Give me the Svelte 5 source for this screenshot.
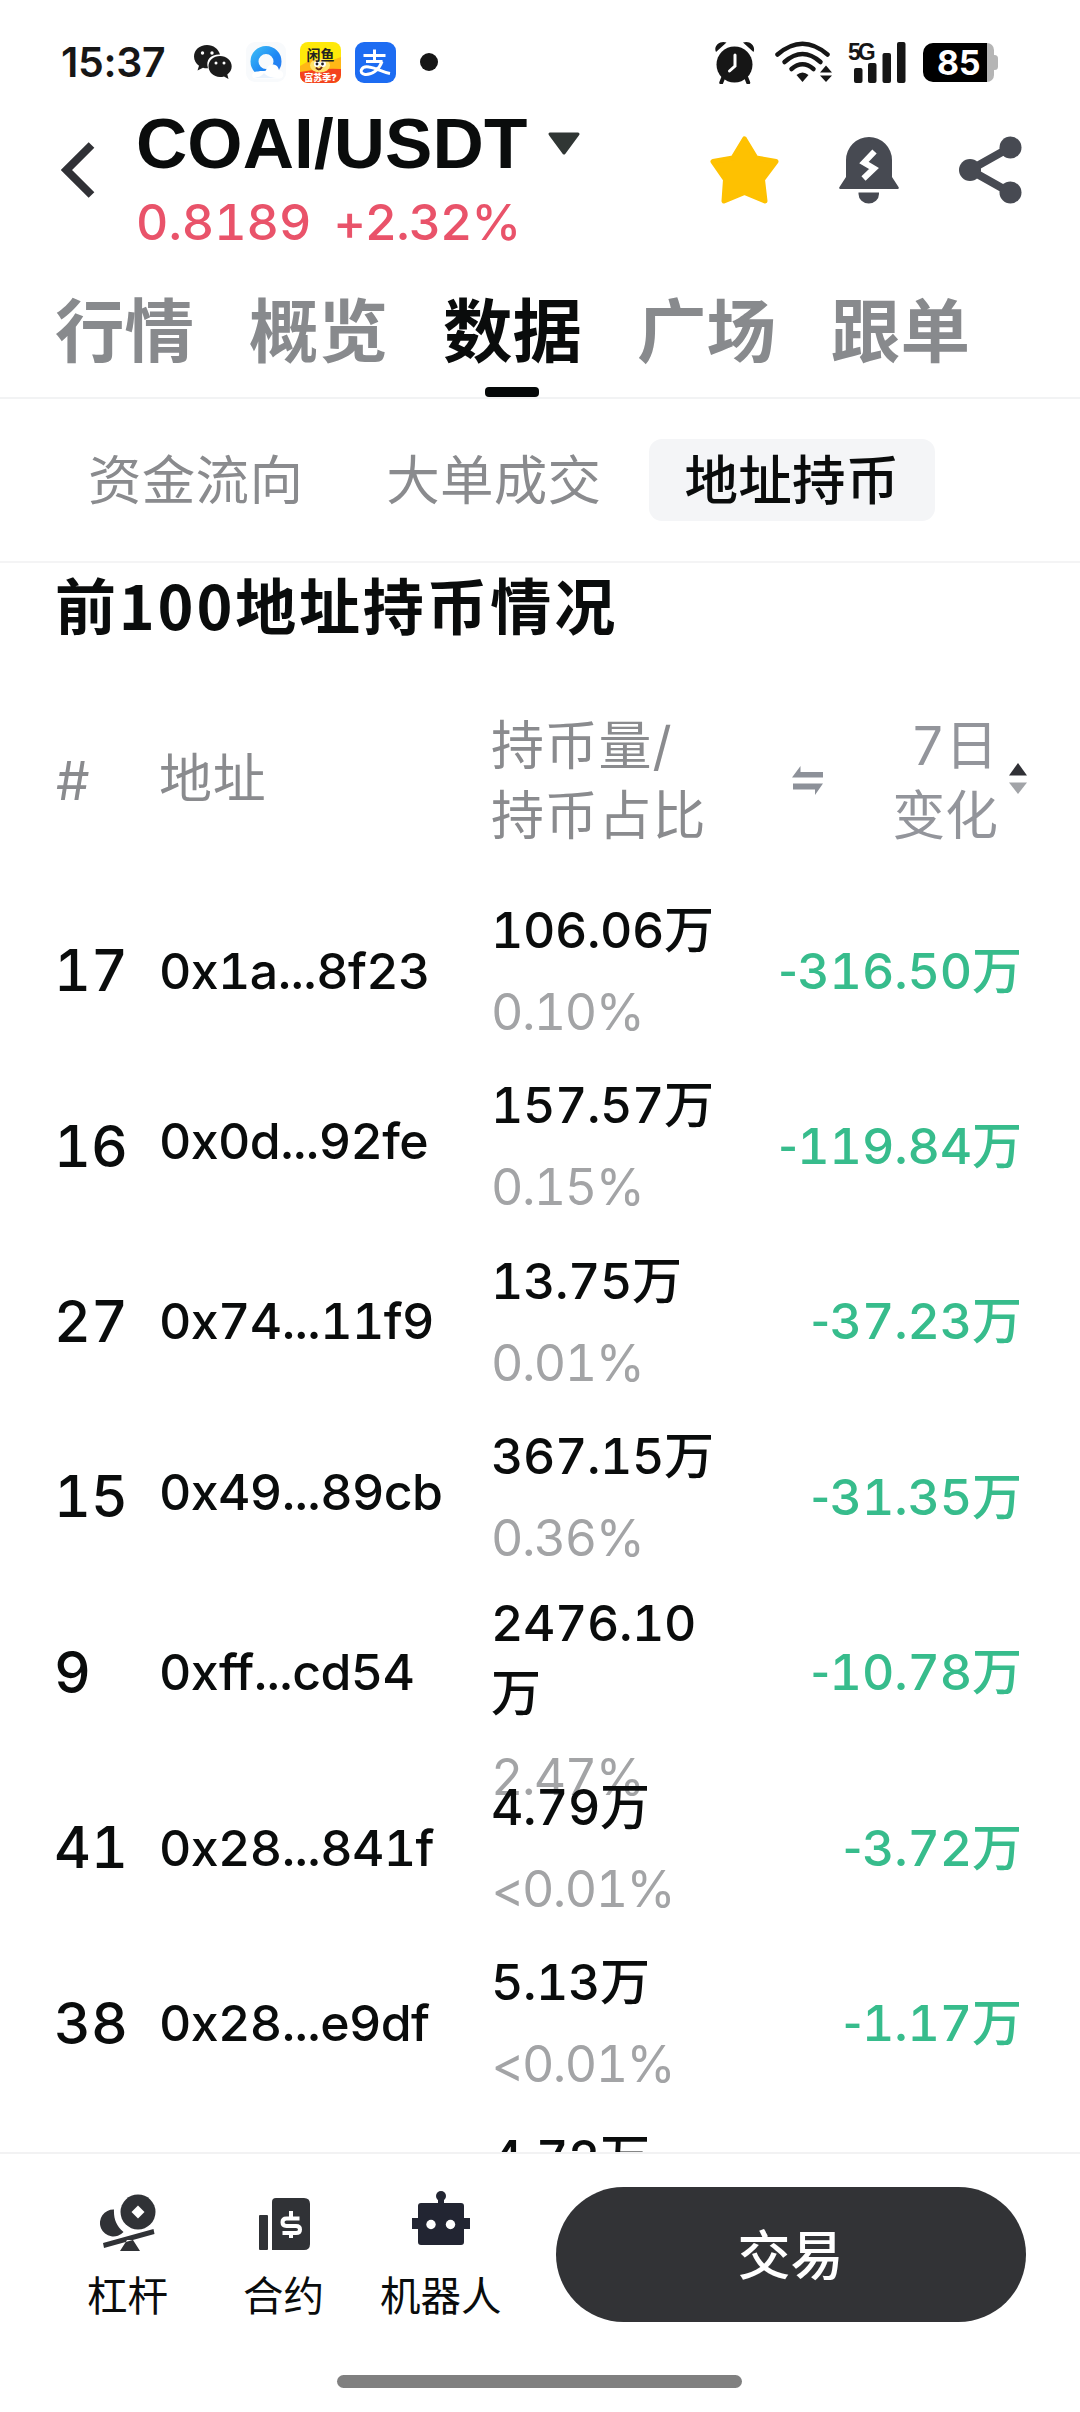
<script>
	const tabs = ['行情', '概览', '数据', '广场', '跟单'];
	const subTabs = ['资金流向', '大单成交', '地址持币'];
	let tab = $state(2);
	let subTab = $state(2);

	const rows = [
		{ rank: 17, addr: '0x1a...8f23', amount: '106.06万', share: '0.10%', change: '316.50万' },
		{ rank: 16, addr: '0x0d...92fe', amount: '157.57万', share: '0.15%', change: '119.84万', raised: true },
		{ rank: 27, addr: '0x74...11f9', amount: '13.75万', share: '0.01%', change: '37.23万' },
		{ rank: 15, addr: '0x49...89cb', amount: '367.15万', share: '0.36%', change: '31.35万', raised: true },
		{ rank: 9, addr: '0xff...cd54', amount: '2476.10万', share: '2.47%', change: '10.78万' },
		{ rank: 41, addr: '0x28...841f', amount: '4.79万', share: '<0.01%', change: '3.72万' },
		{ rank: 38, addr: '0x28...e9df', amount: '5.13万', share: '<0.01%', change: '1.17万' },
		{ rank: '', addr: '', amount: '4.72万', share: '', change: '' }
	];
</script>

<div class="screen">
	<div class="status">
		<span class="time">15:37</span>
		<svg class="wechat" width="38" height="34" viewBox="0 0 38 34">
			<path fill="#1b1b1b" d="M13 0C5.500 0 0 5 0 11.500c0 4 2 7 5 9.200L3.500 25.500l5.500-2.800c1.500.4 3 .6 5 .5C11 14 18 9 26 9.500 24.500 4 19.500 0 13 0z" />
			<path fill="#1b1b1b" d="M26 11c-6.600 0-11.500 4.500-11.500 10.300S19.500 32 26 32c1.400 0 2.800-.2 4-.6l4.500 2.500-1.200-4.300C36 27.500 37.700 24.800 37.700 21.300 37.700 15.500 32.500 11 26 11z" />
			<g fill="#fff"><circle cx="8.500" cy="8" r="1.700" /><circle cx="18" cy="8" r="1.700" /><circle cx="22" cy="18" r="1.500" /><circle cx="30" cy="18" r="1.500" /></g>
		</svg>
		<svg class="qq" width="40" height="40" viewBox="0 0 40 40">
			<defs>
				<linearGradient id="ring" x1="0" y1="0" x2="1" y2="1"><stop offset="0" stop-color="#37b4f5" /><stop offset=".6" stop-color="#1e86f4" /><stop offset="1" stop-color="#2b7cf0" /></linearGradient>
			</defs>
			<rect width="40" height="40" rx="9" fill="#f8fafc" />
			<circle cx="20" cy="19.500" r="11.500" fill="none" stroke="url(#ring)" stroke-width="8" />
			<path fill="#fff" d="M9 36.500c-5-1-3-8 3-7 3-1 6 0 8-1 2-8 12-8 13 0 5 0 6 7 1 8z" />
			<path fill="#eaf2fc" d="M8 36c4-1 7-1 10-5 2 3 8 5 15 5z" />
		</svg>
		<svg class="app" width="41" height="41" viewBox="0 0 41 41">
			<clipPath id="xy"><rect width="41" height="41" rx="8" /></clipPath>
			<g clip-path="url(#xy)">
				<rect width="41" height="41" fill="#ffe90a" />
				<path fill="#ffb716" d="M0 24l12-7 18 2 11-4v16H0z" />
				<path fill="#f4431d" d="M0 30q20-4 41-3v14H0z" />
				<ellipse cx="20" cy="23.500" rx="10" ry="7" fill="#ffe36b" />
				<circle cx="17" cy="22" r="3" fill="#fff" /><circle cx="23" cy="22" r="3" fill="#fff" />
				<circle cx="17" cy="22" r="1.400" fill="#222" /><circle cx="22.500" cy="22" r="1.400" fill="#222" />
				<path d="M16 25.500q3 4 6-.5" stroke="#6b2a10" stroke-width="2" fill="none" />
			</g>
			<text x="20.500" y="17.500" text-anchor="middle" font-size="14" font-weight="700" fill="#222">闲鱼</text>
			<text x="20.500" y="39" text-anchor="middle" font-size="9" font-weight="900" fill="#fff">富苏季?</text>
		</svg>
		<svg class="app" width="41" height="41" viewBox="0 0 41 41">
			<rect width="41" height="41" rx="9" fill="#1d6cf2" />
			<g fill="none" stroke="#fff" stroke-width="3"><path d="M8.500 13.500h22M19.500 7.500v12M11 19.500h16.500" /><path d="M27 19.500C24 28 17 33 10 32.500c-7-1-4-9 4-7.500 8 1 13 5 21 6.500" /></g>
		</svg>
		<i class="dot"></i>
		<div class="sys">
			<svg width="42" height="43" viewBox="0 0 42 43">
				<circle cx="20.500" cy="23.500" r="18" fill="#161616" />
				<path d="M2 11C-1 5 6-1 12.500 1.500zM39.500 11C42 5 36-1 29 1.500z" fill="#161616" />
				<path d="M9.500 36l-2.200 5.500M32 36l2.200 5.500" stroke="#161616" stroke-width="4" stroke-linecap="round" />
				<path d="M21 14v11l-5.500 5" stroke="#fff" stroke-width="3" fill="none" stroke-linecap="round" />
			</svg>
			<svg class="wifi" width="57" height="42" viewBox="0 0 57 42">
				<g fill="none" stroke="#161616" stroke-width="4.500" stroke-linecap="round"><path d="M2.500 13.500Q27.500-8 52.500 13.500" /><path d="M9.500 21Q27.500 5 45.500 21" /><path d="M16.500 28q11-9.500 22 0" /></g>
				<path d="M21.500 34q6-5 12 0l-6 7z" fill="#161616" />
				<path d="M51 24.500l6 7H45zM51 41l-6-6.500h12z" fill="#161616" />
			</svg>
			<div class="signal">
				<b>5G</b>
				<svg width="52" height="41" viewBox="0 0 52 41"><g fill="#161616"><rect y="26" width="8.500" height="15" rx="2" /><rect x="14" y="21" width="8.500" height="20" rx="2" /><rect x="28.500" y="11" width="8.500" height="30" rx="2" /><rect x="43" width="8.500" height="41" rx="2" /></g></svg>
			</div>
			<div class="battery"><span>85</span></div>
		</div>
	</div>

	<header>
		<svg class="back" width="34" height="56" viewBox="0 0 34 56"><path d="M30.500 3L5.500 28l25 25" fill="none" stroke="#303136" stroke-width="8" /></svg>
		<div class="pair">
			<div class="symbol">COAI/USDT<svg width="34" height="24" viewBox="0 0 34 24"><path d="M3 2h28L17 21z" fill="#303634" stroke="#303634" stroke-width="3" stroke-linejoin="round" /></svg></div>
			<div class="price"><span>0.8189</span><span class="pct">+2.32%</span></div>
		</div>
		<div class="actions">
			<svg width="69" height="68" viewBox="0 0 69 68"><path d="M34.500 3L46 22l20 3.500L52.500 43.500 55 65 34.500 56.500 14 65l1.500-21.500L3 25.500 23 22z" fill="#fec101" stroke="#fec101" stroke-width="5" stroke-linejoin="round" /></svg>
			<svg width="60" height="68" viewBox="0 0 60 68">
				<path d="M7 24a23 23 0 0 1 46 0v17l6.500 10q1 2-1 2h-57q-2 0-1-2L7 41zM19.500 56.500h20.500v1.500a10.250 9.500 0 0 1-20.500 0z" fill="#474a52" />
				<path d="M35.500 15.500L25 26.500l10 6L24.500 42.500" fill="none" stroke="#fff" stroke-width="6" stroke-linejoin="miter" />
			</svg>
			<svg width="63" height="68" viewBox="0 0 63 68"><path d="M51 11.500L11 34l40 22.500" fill="none" stroke="#474a52" stroke-width="8" /><g fill="#474a52"><circle cx="51.500" cy="11.500" r="11" /><circle cx="11" cy="34" r="11" /><circle cx="51.500" cy="56.500" r="11" /></g></svg>
		</div>
	</header>

	<nav class="tabs">
		{#each tabs as name, i}
			<button class:active={tab === i} onclick={() => (tab = i)}>{name}</button>
		{/each}
	</nav>

	<nav class="subtabs">
		{#each subTabs as name, i}
			<button class:active={subTab === i} onclick={() => (subTab = i)}>{name}</button>
		{/each}
	</nav>

	<main>
		<h2>前100地址持币情况</h2>
		<div class="row head">
			<div class="rank">#</div>
			<div class="addr">地址</div>
			<div class="hold">持币量/<br />持币占比</div>
			<svg class="swap" width="32" height="30" viewBox="0 0 32 30"><path d="M0 11.500L8.500 0v6H31v5.500zM31 17.500L23 29v-5.500H1v-6z" fill="#8d9199" /></svg>
			<div class="change">7日<br />变化</div>
			<svg class="sort" width="18" height="32" viewBox="0 0 18 32"><path d="M9 0l9 12.500H0z" fill="#303136" /><path d="M9 31L0 19.500h18z" fill="#a2a4a8" /></svg>
		</div>
		{#each rows as row}
			<div class="row">
				<div class="rank">{row.rank}</div>
				<div class="addr" class:raised={row.raised}>{row.addr}</div>
				<div class="hold" class:tall={row.amount.length > 7}>
					<div class="amount">{row.amount}</div>
					<div class="share">{row.share}</div>
				</div>
				<div class="change">{#if row.change}<span class="minus">-</span>{row.change}{/if}</div>
			</div>
		{/each}
	</main>

	<footer>
		<div class="bar">
			<div class="tool lever">
				<svg width="56" height="57" viewBox="0 0 56 57">
					<path d="M14 15.500A13.500 13.500 0 1 0 23.500 38C16 32 13.500 24 14 15.500z" fill="#303236" />
					<circle cx="38" cy="18" r="17.500" fill="#303236" /><path d="M38 11.500l6.500 6.500-6.500 6.500-6.500-6.500z" fill="#fff" />
					<path d="M3 49l1 5 50.500-14-1-5zM27 46h6l7 11H20z" fill="#303236" />
				</svg>
				<span>杠杆</span>
			</div>
			<div class="tool contract">
				<svg width="52" height="52" viewBox="0 0 52 52">
					<rect y="17" width="9" height="35" rx="1" fill="#303236" />
					<path d="M13 4q0-4 4-4h28q6 0 6 6v40q0 6-6 6H13z" fill="#303236" />
					<path d="M40.500 20.500h-13q-4 0-4 3.700t4 3.700h9.500q4 0 4 3.500t-4 3.500H23.500M32 13v8M32 34v6" stroke="#fff" stroke-width="4" fill="none" />
				</svg>
				<span>合约</span>
			</div>
			<div class="tool robot">
				<svg width="58" height="55" viewBox="0 0 58 55">
					<circle cx="29" cy="5" r="5" fill="#222532" /><path d="M26 6h6v8h-6zM9 12h40q3 0 3 3v12h6v11h-6v13q0 3-3 3H9q-3 0-3-3V38H0V27h6V15q0-3 3-3z" fill="#222532" />
					<circle cx="19" cy="33.500" r="4.700" fill="#fff" /><circle cx="38.500" cy="33.500" r="4.700" fill="#fff" />
				</svg>
				<span>机器人</span>
			</div>
			<button class="trade">交易</button>
		</div>
		<div class="home"></div>
	</footer>
</div>

<style>
:global(body) {
	margin: 0;
	background: #fff;
}
.screen {
	width: 1080px;
	height: 2412px;
	overflow: hidden;
	display: flex;
	flex-direction: column;
	background: #fff;
	color: #0a0c0c;
	font-family: Inter, "Noto Sans CJK SC", sans-serif;
	font-variant-numeric: tabular-nums;
}
svg {
	display: block;
	flex: none;
}
button {
	border: 0;
	padding: 0;
	background: none;
	font: inherit;
	color: inherit;
	white-space: nowrap;
}

.status {
	height: 104px;
	flex: none;
	display: flex;
	align-items: center;
	padding: 20px 82px 0 61px;
	box-sizing: border-box;
	color: #161616;
}
.time {
	width: 133px;
	font-size: 41px;
	font-weight: 600;
	font-variant-numeric: normal;
	letter-spacing: -0.3px;
}
.qq {
	margin-left: 14px;
}
.app {
	margin-left: 14px;
}
.dot {
	width: 18px;
	height: 18px;
	margin-left: 24px;
	border-radius: 50%;
	background: #161616;
}
.sys {
	display: flex;
	align-items: center;
	margin-left: auto;
}
.wifi {
	margin-left: 19px;
}
.signal {
	position: relative;
	margin: 0 17px 0 22px;
}
.signal b {
	position: absolute;
	left: -6px;
	top: -1px;
	font: 700 23px/23px "Liberation Sans", sans-serif;
	letter-spacing: -3px;
}
.battery {
	width: 64px;
	height: 39px;
	margin-right: 11px;
	border-radius: 10px 0 0 10px;
	background: #000;
	color: #fff;
	font-size: 34px;
	font-weight: 700;
	line-height: 39px;
	text-align: center;
	position: relative;
}
.battery span {
	padding-left: 8px;
}
.battery::before {
	content: '';
	position: absolute;
	left: 64px;
	top: 0;
	width: 7px;
	height: 39px;
	border-radius: 0 9px 9px 0;
	background: #b5b5b5;
}
.battery::after {
	content: '';
	position: absolute;
	left: 68px;
	top: 12px;
	width: 7px;
	height: 15px;
	border-radius: 4px;
	background: #b5b5b5;
}

header {
	height: 160px;
	flex: none;
	display: flex;
	padding: 0 58px 0 61px;
}
.back {
	margin-top: 38px;
}
.pair {
	margin-left: 41px;
}
.symbol {
	display: flex;
	align-items: center;
	gap: 20px;
	height: 79px;
	font-family: "Liberation Sans", Arial, sans-serif;
	font-size: 71px;
	font-weight: 700;
	letter-spacing: 0.1px;
}
.price {
	display: flex;
	gap: 22px;
	height: 70px;
	font-size: 50px;
	line-height: 79px;
	font-weight: 500;
	color: #e9536a;
}
.pct {
	letter-spacing: -1px;
}
.actions {
	display: flex;
	gap: 60px;
	margin: 32px 0 0 auto;
}

.tabs {
	height: 133px;
	flex: none;
	display: flex;
	gap: 55px;
	padding: 0 55px;
	border-bottom: 2px solid #f2f3f4;
}
.tabs button {
	position: relative;
	font-size: 69.500px;
	line-height: 136px;
	font-weight: 700;
	color: #888a8d;
}
.tabs .active {
	color: #0a0c0c;
}
.tabs .active::after {
	content: '';
	position: absolute;
	left: 50%;
	bottom: 0;
	width: 54px;
	height: 10px;
	margin-left: -28px;
	border-radius: 4px;
	background: #050808;
}

.subtabs {
	height: 162px;
	flex: none;
	display: flex;
	align-items: center;
	gap: 13px;
	padding-left: 53px;
	border-bottom: 2px solid #f4f4f5;
}
.subtabs button {
	height: 82px;
	padding: 0 35px;
	border-radius: 13px;
	font-size: 53.500px;
	line-height: 84px;
	letter-spacing: 0.3px;
	color: #8a8b8e;
}
.subtabs .active {
	background: #f4f5f7;
	color: #0a0c0c;
	font-weight: 500;
}

main {
	flex: 1;
	min-height: 0;
	overflow: hidden;
	padding: 0 58px 0 55px;
}
h2 {
	height: 83px;
	margin: 0;
	font-family: "Noto Sans CJK SC", sans-serif;
	font-size: 61px;
	line-height: 82px;
	font-weight: 700;
	letter-spacing: 2.800px;
}
.row {
	display: flex;
	align-items: center;
	height: 175.400px;
	font-size: 50px;
	font-weight: 500;
}
.head {
	height: 238px;
	box-sizing: border-box;
	padding-top: 31px;
	font-size: 53px;
	line-height: 70px;
	font-weight: 400;
	letter-spacing: 0.8px;
	color: #8a8b8e;
}
.rank {
	width: 105px;
	margin-left: -1px;
	margin-top: -2px;
	font-size: 57px;
}
.head .rank,
.head .addr {
	font-size: 53px;
}
.head .rank {
	margin-left: 1px;
	width: 103px;
	margin-top: 0;
}
.addr {
	width: 332px;
	margin-top: -2px;
	letter-spacing: -0.600px;
}
.head .addr {
	margin-top: -4px;
	letter-spacing: 0.8px;
}
.raised {
	margin-top: -12px;
}
.hold {
	width: 232px;
	height: 100%;
}
.head .hold {
	height: auto;
	width: 301px;
}
.amount {
	line-height: 70px;
	margin-top: 11px;
	letter-spacing: -0.400px;
}
.share {
	margin-top: 12px;
	line-height: 70px;
	font-weight: 400;
	letter-spacing: -1.500px;
	color: #a3a4a6;
}
.tall .amount {
	margin-top: 2px;
}
.tall .share {
	margin-top: 14px;
}
.change {
	flex: 1;
	margin-top: -10px;
	text-align: right;
	letter-spacing: -0.100px;
	color: #37bc8c;
	white-space: nowrap;
}
.minus {
	font-family: "Liberation Sans", Arial, sans-serif;
	font-size: 56px;
}
.head .change {
	margin-top: 0;
	color: #93959b;
}
.sort {
	margin: -4px -5px 0 11px;
}

footer {
	height: 260px;
	flex: none;
	box-sizing: border-box;
	border-top: 2px solid #f2f2f3;
}
.bar {
	display: flex;
	height: 221px;
	padding-left: 87px;
}
.tool {
	display: flex;
	flex-direction: column;
	align-items: center;
	justify-content: flex-end;
	height: 171px;
	font-size: 40.500px;
	line-height: 56px;
}
.tool svg {
	margin-bottom: 18px;
}
.contract {
	margin-left: 75px;
}
.contract svg {
	margin: 0 0 19px 3px;
}
.robot {
	margin-left: 56px;
}
.robot svg {
	margin-bottom: 23px;
}
.trade {
	width: 470px;
	height: 135px;
	margin: 33px 0 0 54px;
	padding-bottom: 6px;
	border-radius: 68px;
	background: #323336;
	color: #fff;
	font-size: 53px;
	font-weight: 500;
}
.home {
	width: 405px;
	height: 13px;
	margin: 0 0 0 337px;
	border-radius: 7px;
	background: #808080;
}
</style>
